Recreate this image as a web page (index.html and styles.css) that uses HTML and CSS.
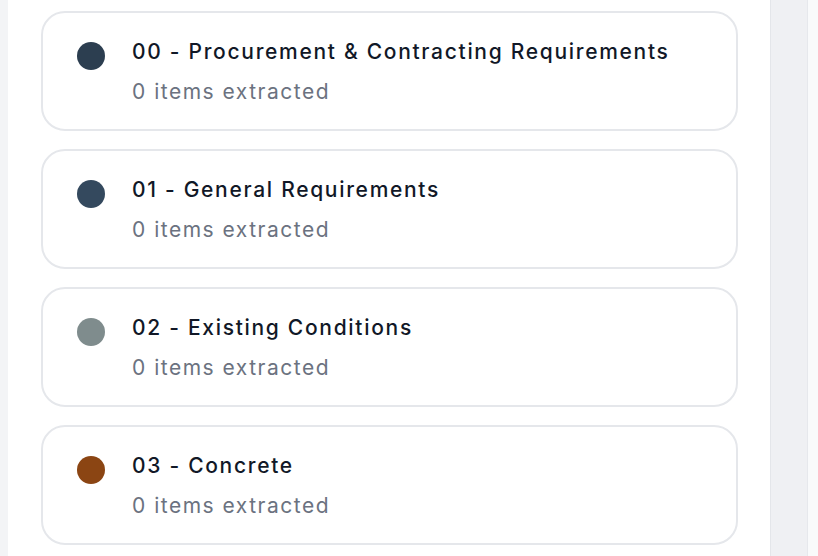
FILE: index.html
```html
<!DOCTYPE html>
<html>
<head>
<meta charset="utf-8">
<link rel="stylesheet" href="styles.css">
</head>
<body>
<div class="layout">
  <div class="gutter"></div>
  <main class="panel">
    <div class="card">
      <span class="dot dot-00"></span>
      <div class="info">
        <div class="title">00 - Procurement &amp; Contracting Requirements</div>
        <div class="sub">0 items extracted</div>
      </div>
    </div>
    <div class="card">
      <span class="dot dot-01"></span>
      <div class="info">
        <div class="title">01 - General Requirements</div>
        <div class="sub">0 items extracted</div>
      </div>
    </div>
    <div class="card">
      <span class="dot dot-02"></span>
      <div class="info">
        <div class="title">02 - Existing Conditions</div>
        <div class="sub">0 items extracted</div>
      </div>
    </div>
    <div class="card">
      <span class="dot dot-03"></span>
      <div class="info">
        <div class="title">03 - Concrete</div>
        <div class="sub">0 items extracted</div>
      </div>
    </div>
  </main>
  <div class="side"></div>
  <div class="edge"></div>
</div>
</body>
</html>
```
FILE: styles.css
```css
* { box-sizing: border-box; }
html, body {
  margin: 0;
  padding: 0;
  height: 100%;
  overflow: hidden;
  font-family: Inter, "Noto Sans", sans-serif;
}
.layout {
  display: flex;
  height: 556px;
  background: #f3f4f6;
}
.gutter {
  width: 8px;
  flex: none;
  background: #f3f4f6;
}
.panel {
  width: 763px;
  flex: none;
  background: #ffffff;
  padding: 11px 32px 0 33px;
  display: flex;
  flex-direction: column;
  gap: 18px;
  border-right: 1px solid #e4e6ea;
}
.side {
  width: 37px;
  flex: none;
  background: #eff0f3;
  border-right: 1px solid #e6e8ec;
}
.edge {
  flex: 1;
  background: #f9fafb;
}
.card {
  height: 120px;
  flex: none;
  border: 2px solid #e5e7eb;
  border-radius: 24px;
  display: flex;
  align-items: flex-start;
  padding: 24px 20px 0 34px;
  gap: 27px;
}
.dot {
  width: 28px;
  height: 28px;
  border-radius: 50%;
  flex: none;
  margin-top: 4.5px;
}
.dot-00 { background: #2c3e50; }
.dot-01 { background: #34495e; }
.dot-02 { background: #7f8c8d; }
.dot-03 { background: #8b4513; }
.info {
  display: flex;
  flex-direction: column;
  gap: 10px;
}
.title {
  font-size: 21px;
  line-height: 30px;
  font-weight: 500;
  color: #111827;
  letter-spacing: 1.7px;
}
.sub {
  font-size: 21px;
  line-height: 30px;
  color: #6b7280;
  letter-spacing: 1.5px;
}
```
